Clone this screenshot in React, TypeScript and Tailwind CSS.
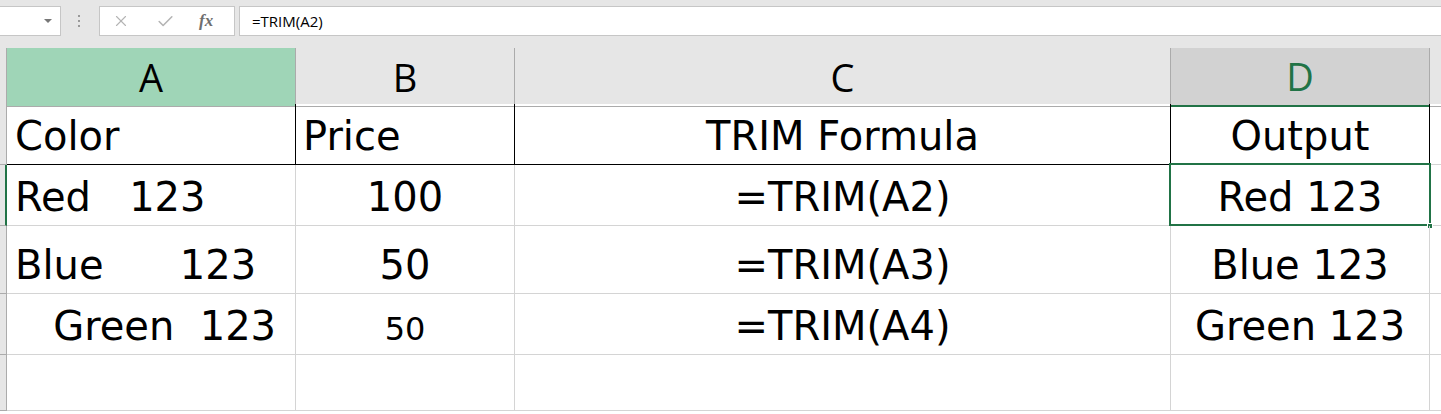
import { X, Check } from 'lucide-react';

const cellFont = { fontFamily: '"Comic Sans MS", "DejaVu Sans", sans-serif' };

type Row = {
  h: string;
  a: string;
  b: string;
  c: string;
  d: string;
  head?: boolean;
  small?: boolean;
};

const ROWS: Row[] = [
  { h: 'h-[61px]', a: 'Color', b: 'Price', c: 'TRIM Formula', d: 'Output', head: true },
  { h: 'h-[61px]', a: 'Red   123', b: '100', c: '=TRIM(A2)', d: 'Red 123' },
  { h: 'h-[68px]', a: 'Blue      123', b: '50', c: '=TRIM(A3)', d: 'Blue 123' },
  { h: 'h-[61px]', a: '   Green  123', b: '50', c: '=TRIM(A4)', d: 'Green 123', small: true },
  { h: 'h-[56px]', a: '', b: '', c: '', d: '' },
];

function FormulaBar() {
  return (
    <div className="flex h-[48px] items-start bg-[#e6e6e6] pt-[6px]">
      <div className="relative -ml-px flex h-[30px] w-[62px] items-center justify-end border border-[#c6c6c6] bg-white pr-[8px]">
        <div className="h-0 w-0 border-x-[4px] border-t-[4px] border-x-transparent border-t-[#777]" />
      </div>
      <div className="ml-[16px] flex h-[30px] w-[4px] flex-col items-center justify-center gap-[3px]">
        <div className="h-[2px] w-[2px] bg-[#999]" />
        <div className="h-[2px] w-[2px] bg-[#999]" />
        <div className="h-[2px] w-[2px] bg-[#999]" />
      </div>
      <div className="ml-[18px] flex h-[30px] w-[136px] items-center border border-[#c6c6c6] bg-white">
        <X size={18} strokeWidth={1.5} className="ml-[12px] text-[#b4b4b4]" />
        <Check size={19} strokeWidth={2} className="ml-[26px] text-[#b4b4b4]" />
        <span
          className="ml-[24px] text-[17px] font-bold italic text-[#6f6f6f]"
          style={{ fontFamily: '"Liberation Serif", serif' }}
        >
          fx
        </span>
      </div>
      <div
        className="ml-[4px] flex h-[30px] flex-1 items-center border border-r-0 border-[#c6c6c6] bg-white pl-[12px] text-[15px] text-black"
        style={{ fontFamily: '"Open Sans", "Noto Sans", sans-serif' }}
      >
        =TRIM(A2)
      </div>
    </div>
  );
}

function ColumnHeaders() {
  const hdr = 'flex items-center justify-center border-r border-b border-[#ababab] text-[38px]';
  return (
    <div
      className="grid h-[56px] grid-cols-[7px_289px_219px_656px_259px_1fr] bg-[#e6e6e6]"
      style={{ fontFamily: '"Open Sans", "Noto Sans", sans-serif' }}
    >
      <div className="border-r border-b border-[#ababab]" />
      <div className={`${hdr} bg-[#9fd5b7] text-black`}>A</div>
      <div className={`${hdr} text-black`}>B</div>
      <div className={`${hdr} text-black`}>C</div>
      <div className="flex items-center justify-center border-r border-[#ababab] border-b-2 border-b-[#217346] bg-[#d2d2d2] text-[38px] text-[#217346]">
        D
      </div>
      <div className="border-b border-[#ababab]" />
    </div>
  );
}

function Sheet() {
  return (
    <div className="bg-white" style={cellFont}>
      {ROWS.map((r, i) => {
        const line = r.head ? 'border-black' : 'border-[#d4d4d4]';
        const cell = `flex items-end border-r border-b ${line} pb-[8px] leading-none whitespace-pre text-black`;
        return (
          <div key={i} className={`grid ${r.h} grid-cols-[7px_289px_219px_656px_259px_1fr]`}>
            <div
              className={`border-r ${i === 1 ? 'border-r-2 border-r-[#217346]' : 'border-r-[#ababab]'} border-b border-b-[#ababab] bg-[#e6e6e6]`}
            />
            <div className={`${cell} text-[40px] pl-[8px]`}>{r.a}</div>
            <div
              className={`${cell} ${r.head ? 'pl-[7px]' : 'justify-center'} ${r.small ? 'text-[32px] pb-[9px]' : 'text-[40px]'}`}
            >
              {r.b}
            </div>
            <div className={`${cell} text-[40px] justify-center`}>{r.c}</div>
            <div className={`relative ${cell} text-[40px] justify-center`}>
              {r.d}
              {i === 1 && (
                <>
                  <div className="absolute -top-[2px] -left-[2px] -right-[2px] -bottom-[1px] border-2 border-[#217346]" />
                  <div className="absolute -right-[4px] -bottom-[4px] h-[6px] w-[6px] border border-white bg-[#217346]" />
                </>
              )}
            </div>
            <div className="border-b border-[#d4d4d4]" />
          </div>
        );
      })}
    </div>
  );
}

export default function App() {
  return (
    <div className="h-[414px] w-[1441px] overflow-hidden bg-white">
      <FormulaBar />
      <ColumnHeaders />
      <Sheet />
    </div>
  );
}
